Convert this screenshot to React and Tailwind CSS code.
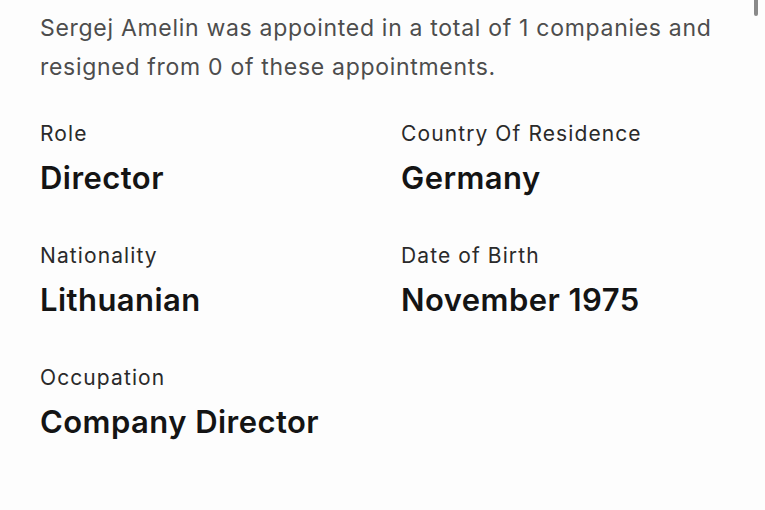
export default function App() {
  const items = [
    ["Role", "Director"],
    ["Country Of Residence", "Germany"],
    ["Nationality", "Lithuanian"],
    ["Date of Birth", "November 1975"],
    ["Occupation", "Company Director"],
  ];
  return (
    <div className="relative w-[765px] h-[510px] bg-[#fdfdfd] overflow-hidden" style={{ fontFamily: "Inter, 'Noto Sans', sans-serif" }}>
      <div className="absolute right-[7px] top-0 w-[4px] h-[16px] rounded-b bg-[#8a8a8a]" />
      <div className="pl-[40px] pt-[9px]">
        <p className="text-[23px] leading-[39px] text-[#4d4d4d] tracking-[0.7px]">
          Sergej Amelin was appointed in a total of 1 companies and
          <br />
          resigned from 0 of these appointments.
        </p>
        <div className="mt-[35px] grid grid-cols-[361px_1fr] gap-y-[48px]">
          {items.map(([label, value]) => (
            <div key={label} className="flex flex-col">
              <span className="text-[21px] leading-[24px] text-[#2a2a2a] tracking-[1.1px]">{label}</span>
              <span className="mt-[14px] text-[31px] leading-[36px] font-semibold text-[#141414] tracking-[0.45px]">{value}</span>
            </div>
          ))}
        </div>
      </div>
    </div>
  );
}
